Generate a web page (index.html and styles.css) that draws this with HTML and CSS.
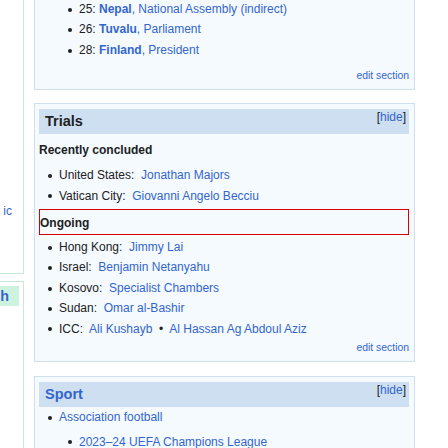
FILE: index.html
```html
<!DOCTYPE html>
<html lang="en">
<head>
<meta charset="utf-8">
<title>Current events</title>
<link rel="stylesheet" href="styles.css">
</head>
<body>
<div class="page">
  <aside class="side">
    <div class="sbox sbox-a">
      <div class="sline"><a href="#">ic</a></div>
    </div>
    <div class="sbox sbox-b">
      <div class="shead"><a href="#">h</a></div>
    </div>
  </aside>
  <main class="main">
    <section class="box box-cont">
      <ul class="deep">
        <li>25: <a href="#"><b>Nepal</b>, National Assembly (indirect)</a></li>
        <li>26: <a href="#"><b>Tuvalu</b>, Parliament</a></li>
        <li>28: <a href="#"><b>Finland</b>, President</a></li>
      </ul>
      <div class="edit edit-first"><a href="#">edit section</a></div>
    </section>

    <section class="box">
      <div class="head">
        <h2>Trials</h2>
        <span class="hide">[<a href="#">hide</a>]</span>
      </div>
      <div class="sub">Recently concluded</div>
      <ul class="list-recent">
        <li>United States:&nbsp; <a href="#">Jonathan Majors</a></li>
        <li>Vatican City:&nbsp; <a href="#">Giovanni Angelo Becciu</a></li>
      </ul>
      <div class="sub ongoing">Ongoing</div>
      <ul class="list-ongoing">
        <li>Hong Kong:&nbsp; <a href="#">Jimmy Lai</a></li>
        <li>Israel:&nbsp; <a href="#">Benjamin Netanyahu</a></li>
        <li>Kosovo:&nbsp; <a href="#">Specialist Chambers</a></li>
        <li>Sudan:&nbsp; <a href="#">Omar al-Bashir</a></li>
        <li>ICC:&nbsp; <a href="#">Ali Kushayb</a> &nbsp;•&nbsp; <a href="#">Al Hassan Ag Abdoul Aziz</a></li>
      </ul>
      <div class="edit"><a href="#">edit section</a></div>
    </section>

    <section class="box box-sport">
      <div class="head">
        <h2><a href="#">Sport</a></h2>
        <span class="hide">[<a href="#">hide</a>]</span>
      </div>
      <ul class="list-sport">
        <li><a href="#">Association football</a>
          <ul class="inner">
            <li><a href="#">2023–24 UEFA Champions League</a></li>
          </ul>
        </li>
      </ul>
    </section>
  </main>
</div>
</body>
</html>
```

FILE: styles.css
```css
* {
  box-sizing: border-box;
}

body {
  margin: 0;
  font-family: "Liberation Sans", Arial, sans-serif;
  font-size: 12px;
  line-height: 1.6;
  color: #202122;
  background: #ffffff;
}

a {
  color: #3366cc;
  text-decoration: none;
}

.page {
  display: flex;
  gap: 10px;
  align-items: flex-start;
  height: 448px;
  overflow: hidden;
}

/* left column (mostly off-screen) */
.side {
  width: 24px;
  flex: none;
  display: flex;
  flex-direction: column;
  gap: 7px;
  height: 448px;
}

.sbox {
  border: 1px solid #c6e9d8;
  border-left: 0;
  background: #ffffff;
  overflow: hidden;
}

.sbox-a {
  border-top: 0;
  height: 274px;
  padding-top: 202px;
}

.sline {
  display: flex;
  justify-content: flex-end;
  padding-right: 11px;
  white-space: nowrap;
  line-height: 19.2px;
}

.sbox-b {
  flex: 1;
  border-bottom: 0;
  padding: 4px 4px 0 0;
}

.shead {
  display: flex;
  justify-content: flex-end;
  height: 20px;
  background: #cef2e0;
  padding-right: 10px;
  font-weight: bold;
  font-size: 14.4px;
  line-height: 20px;
  white-space: nowrap;
  overflow: hidden;
}

/* main column */
.main {
  width: 381px;
  flex: none;
  display: flex;
  flex-direction: column;
  gap: 13px;
}

.box {
  border: 1px solid #cedff2;
  background: #f5faff;
  padding: 5px 5px 5px 4px;
}

.box-cont {
  border-top: 0;
  padding-top: 0;
}

.box-sport {
  margin-top: 1px;
}

.head {
  display: flex;
  justify-content: space-between;
  align-items: flex-start;
  height: 25px;
  background: #cedff2;
  padding: 0 3px 0 6px;
}

.head h2 {
  margin: 0;
  font-size: 14.5px;
  line-height: 25px;
  font-weight: bold;
}

.hide {
  font-size: 12px;
  line-height: 17px;
}

.sub {
  font-weight: bold;
  margin-top: 7.4px;
  line-height: 19.2px;
}

.ongoing {
  margin-top: 2.8px;
  border: 1px solid #d80000;
  padding: 4px 0 0.8px 0;
}

ul {
  list-style: none;
  margin: 0;
  padding-left: 20px;
}

ul.deep {
  padding-left: 40px;
}

.list-recent {
  margin-top: 5.8px;
}

.list-ongoing {
  margin-top: 3.4px;
}

.list-sport {
  margin-top: 1px;
}

.inner {
  margin-top: 5px;
}

li {
  line-height: 19.2px;
  margin-bottom: 1.2px;
}

li::before {
  content: "";
  display: inline-block;
  width: 4px;
  height: 4px;
  border-radius: 50%;
  background: #202122;
  margin-left: -11px;
  margin-right: 7px;
  vertical-align: middle;
}

.edit {
  text-align: right;
  font-size: 10.4px;
  line-height: 16px;
  margin-top: 1.6px;
}

.edit-first {
  margin-top: 7.8px;
}
```
